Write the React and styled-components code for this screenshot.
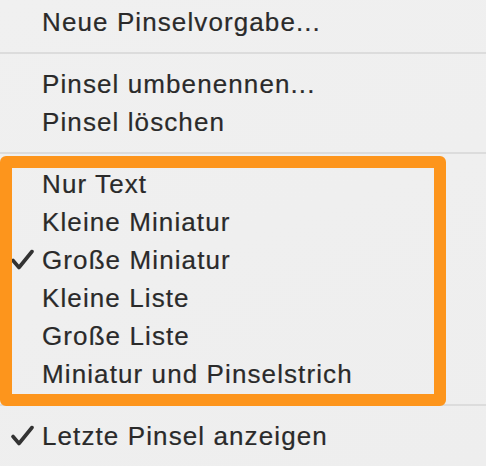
import React from 'react';
import styled, { createGlobalStyle } from 'styled-components';

const GlobalStyle = createGlobalStyle`
  html, body {
    margin: 0;
    padding: 0;
    background: #efefef;
  }
  body {
    font-family: "Liberation Sans", Arial, sans-serif;
  }
`;

const Menu = styled.div`
  width: 486px;
  height: 466px;
  overflow: hidden;
  padding-top: 3px;
  box-sizing: border-box;
  background: linear-gradient(160deg, #f0f0f0 0%, #eeeeee 100%);
  display: flex;
  flex-direction: column;
`;

const Item = styled.div`
  position: relative;
  height: 38px;
  display: flex;
  align-items: center;
  padding-left: 42px;
  font-size: 26px;
  letter-spacing: 1.1px;
  color: #2a2a2a;
  white-space: nowrap;
  -webkit-text-stroke: 0.2px #2a2a2a;
`;

const Check = styled.svg`
  position: absolute;
  left: 11px;
  top: 50%;
  transform: translateY(-50%);
  width: 23px;
  height: 21px;
`;

const Separator = styled.div`
  height: 24px;
  display: flex;
  align-items: center;

  &::after {
    content: '';
    flex: 1;
    height: 2px;
    background: #dcdcdc;
  }
`;

const Group = styled.div`
  position: relative;
  display: flex;
  flex-direction: column;
`;

const Highlight = styled.div`
  position: absolute;
  left: 0;
  top: -9px;
  width: 446px;
  height: 250px;
  box-sizing: border-box;
  border: 12px solid #fd951c;
  border-radius: 6px;
  pointer-events: none;
`;

const CheckMark = () => (
  <Check viewBox="0 0 23 21">
    <path
      d="M2 11 L8 18 L21 2"
      fill="none"
      stroke="#333"
      strokeWidth="3.6"
      strokeLinecap="round"
      strokeLinejoin="round"
    />
  </Check>
);

const MenuItem = ({ checked, children }) => (
  <Item>
    {checked && <CheckMark />}
    {children}
  </Item>
);

export default function App() {
  return (
    <>
      <GlobalStyle />
      <Menu>
        <MenuItem>Neue Pinselvorgabe...</MenuItem>
        <Separator />
        <MenuItem>Pinsel umbenennen...</MenuItem>
        <MenuItem>Pinsel löschen</MenuItem>
        <Separator />
        <Group>
          <MenuItem>Nur Text</MenuItem>
          <MenuItem>Kleine Miniatur</MenuItem>
          <MenuItem checked>Große Miniatur</MenuItem>
          <MenuItem>Kleine Liste</MenuItem>
          <MenuItem>Große Liste</MenuItem>
          <MenuItem>Miniatur und Pinselstrich</MenuItem>
          <Highlight />
        </Group>
        <Separator />
        <MenuItem checked>Letzte Pinsel anzeigen</MenuItem>
      </Menu>
    </>
  );
}
